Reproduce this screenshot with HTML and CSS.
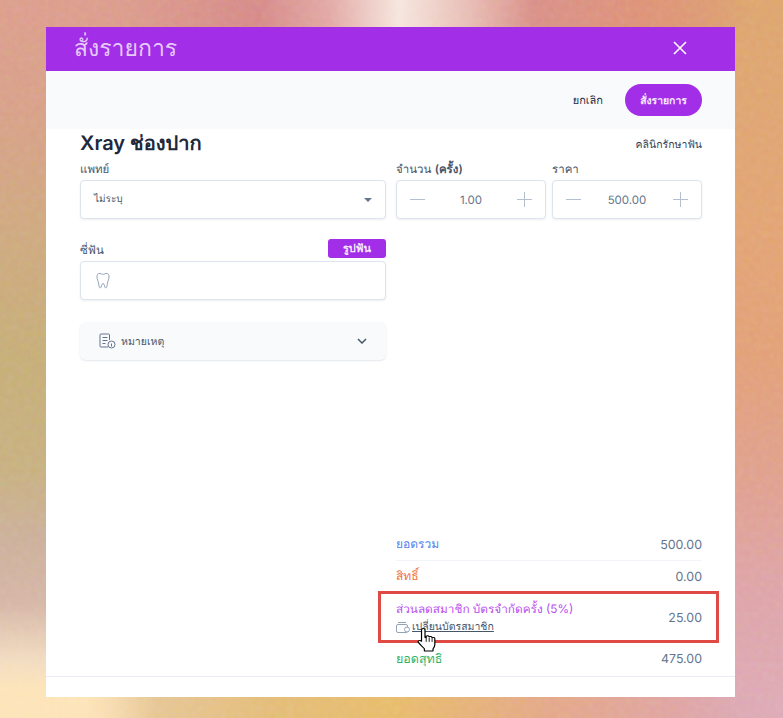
FILE: index.html
```html
<!DOCTYPE html>
<html lang="th">
<head>
    <meta charset="UTF-8">
    <meta name="viewport" content="width=device-width, initial-scale=1.0">
    <title>สั่งรายการ</title>
    <link rel="stylesheet" href="styles.css">
</head>
<body>
    <svg class="grain" width="783" height="718">
        <filter id="grain-filter">
            <feTurbulence type="fractalNoise" baseFrequency="0.16" numOctaves="2" seed="4"/>
            <feColorMatrix type="saturate" values="1.6"/>
        </filter>
        <rect width="783" height="718" filter="url(#grain-filter)"/>
    </svg>
    <div class="modal">
        <header class="modal-head">
            <h1>สั่งรายการ</h1>
            <svg class="close-icon" width="16" height="16" viewBox="0 0 16 16"><path d="M2 2l12 12M14 2L2 14" stroke="#fff" stroke-width="1.6" fill="none"/></svg>
        </header>
        <div class="toolbar">
            <span class="cancel">ยกเลิก</span>
            <button class="submit">สั่งรายการ</button>
        </div>
        <div class="content">
            <div class="title-row">
                <h2>Xray ช่องปาก</h2>
                <span class="clinic">คลินิกรักษาฟัน</span>
            </div>
            <div class="form-grid">
                <div class="col-left">
                    <label class="field-label">แพทย์</label>
                    <div class="input-box select-box">
                        <span>ไม่ระบุ</span>
                        <span class="caret"></span>
                    </div>
                    <div class="tooth-label">
                        <label class="field-label">ซี่ฟัน</label>
                        <span class="tooth-btn">รูปฟัน</span>
                    </div>
                    <div class="input-box tooth-box">
                        <svg width="14" height="18" viewBox="0 0 14 18" fill="none" stroke="#94a3b8" stroke-width="1"><path d="M4 1.500C2 1 1 2.600 1 5c0 2.500 1.200 3.500 1.500 6 .2 2 .7 5 1.800 5 1.200 0 1-4.500 2.700-4.500S8.500 16 9.700 16c1.100 0 1.600-3 1.800-5 .3-2.500 1.500-3.500 1.500-6 0-2.400-1-4-3-3.500C8.500 1.900 8 2.300 7 2.300S5.500 1.900 4 1.500z"/></svg>
                    </div>
                    <div class="note-bar">
                        <svg width="17" height="16" viewBox="0 0 17 16" fill="none" stroke="#64748b" stroke-width="1"><path d="M10.500 7V2a1 1 0 0 0-1-1H2a1 1 0 0 0-1 1v11a1 1 0 0 0 1 1h7M3.500 4.500h5M3.500 7.500h5M3.500 10.500h3"/><circle cx="12.500" cy="11.500" r="3.500"/><path d="M12.500 10.500v3"/></svg>
                        <span class="note-text">หมายเหตุ</span>
                        <svg class="chevron" width="10" height="6" viewBox="0 0 10 6" fill="none" stroke="#475569" stroke-width="1.500"><path d="M1 1l4 4 4-4"/></svg>
                    </div>
                </div>
                <div>
                    <label class="field-label">จำนวน <b>(ครั้ง)</b></label>
                    <div class="input-box stepper">
                        <span class="step-minus"></span>
                        <span class="step-value">1.00</span>
                        <span class="step-plus"></span>
                    </div>
                </div>
                <div>
                    <label class="field-label">ราคา</label>
                    <div class="input-box stepper">
                        <span class="step-minus"></span>
                        <span class="step-value">500.00</span>
                        <span class="step-plus"></span>
                    </div>
                </div>
            </div>
            <div class="summary">
                <div class="sum-row sum-total">
                    <span class="blue">ยอดรวม</span>
                    <span class="sum-num">500.00</span>
                </div>
                <div class="sum-row sum-right">
                    <span class="orange">สิทธิ์</span>
                    <span class="sum-num">0.00</span>
                </div>
                <div class="sum-row sum-member">
                    <div class="member-text">
                        <div class="purple">ส่วนลดสมาชิก บัตรจำกัดครั้ง (5%)</div>
                        <div class="swap">
                            <svg width="14" height="11" viewBox="0 0 14 11" fill="none" stroke="#94a3b8" stroke-width="1"><rect x="0.500" y="2.500" width="11" height="8" rx="1.500"/><path d="M2 .5h8"/><circle cx="11" cy="7.500" r="2.500" fill="#fff"/></svg>
                            <a href="#">เปลี่ยนบัตรสมาชิก</a>
                        </div>
                    </div>
                    <span class="sum-num">25.00</span>
                    <svg class="cursor" width="24" height="25" viewBox="0 0 20 26" preserveAspectRatio="none"><path d="M6 1.500c1 0 1.500.7 1.500 1.500v8l1 .2V9.500c1-.8 2.200-.4 2.500.7.900-.7 2.100-.3 2.400.8 1-.5 2.300 0 2.300 1.300v6c0 2-.7 3.200-1.500 4.400v2.300H7v-2.300c-1.500-2-3.500-4.500-5-6.700-.8-1.300.7-2.700 2-1.700l.6.600V3c0-.8.500-1.500 1.400-1.500z" fill="#fff" stroke="#000" stroke-width="1" stroke-linejoin="round"/><path d="M8.500 11.500v4M11 11v4.500M13.400 11.500v4" stroke="#000" stroke-width=".8"/></svg>
                </div>
                <div class="sum-row sum-net">
                    <span class="green">ยอดสุทธิ</span>
                    <span class="sum-num">475.00</span>
                </div>
            </div>
        </div>
        <div class="modal-foot"></div>
    </div>
</body>
</html>
```

FILE: styles.css
```css
html, body {
    height: 100%;
}
body {
    margin: 0;
    overflow: hidden;
    position: relative;
    font-family: Inter, "Noto Sans", "Liberation Sans", sans-serif;
    text-rendering: geometricPrecision;
    color: #334155;
    background-color: #e0a878;
    background-repeat: no-repeat;
    background-image:
        linear-gradient(90deg, #dc9e8c, #dc9c8c 15%, #d68a88 33%, #e2a8a4 42%, #f6e6de 51%, #e8bcb4 60%, #d99088 68%, #de9278 82%, #dd9a74 90%, #dda56f 96%),
        linear-gradient(90deg, #fde4b8 11%, #f8dcb0 14%, #e6c694 20%, #e4bc78 35%, #e8bc6c 50%, #e4a888 70%, #e0a4a0 85%, #dca8b2 94%, #deaab6),
        linear-gradient(#dc9e8c, #d8a088 15%, #d0a880 30%, #c6ae78 50%, #c8b080 65%, #ccb09a 75%, #d6b6a6 84%, #f2dcc0 92%, #fde4b8 96%),
        linear-gradient(#dda56f, #e2a474 30%, #e2a078 50%, #e0a090 68%, #dea4a8 82%, #deaab6);
    background-size: 100% 27px, 100% 21px, 46px 100%, 48px 100%;
    background-position: top, bottom, left, right;
}
.grain {
    position: absolute;
    left: 0;
    top: 0;
    opacity: 0.14;
    mix-blend-mode: overlay;
}
.modal {
    width: 689px;
    height: 670px;
    margin-left: 46px;
    background: #fff;
    display: flex;
    flex-direction: column;
    position: relative;
    top: 27px;
}
.modal-head {
    height: 44px;
    background: #a22ee8;
    display: flex;
    justify-content: space-between;
    align-items: center;
    padding: 0 47px 0 28px;
    flex-shrink: 0;
}
.modal-head h1 {
    margin: 0;
    font-size: 23px;
    font-weight: 500;
    color: #e6caf8;
}
.close-icon {
    margin-top: -3px;
}
.toolbar {
    height: 58px;
    background: #f8fafc;
    display: flex;
    justify-content: flex-end;
    align-items: center;
    gap: 22px;
    padding: 0 33px;
    flex-shrink: 0;
}
.cancel {
    font-size: 11px;
    font-weight: 500;
    color: #1e293b;
}
.submit {
    width: 77px;
    height: 32px;
    border: none;
    border-radius: 16px;
    background: #a22ee8;
    color: #f5e9fd;
    font-family: inherit;
    text-rendering: inherit;
    font-size: 10.400px;
    font-weight: 600;
}
.content {
    flex: 1;
    padding: 0 33px 0 34px;
    display: flex;
    flex-direction: column;
}
.title-row {
    display: flex;
    justify-content: space-between;
    align-items: center;
    height: 28px;
}
.title-row h2 {
    margin: 0;
    font-size: 20px;
    font-weight: 600;
    color: #1e293b;
}
.clinic {
    font-size: 10.500px;
    color: #334155;
    margin-top: 3px;
}
.form-grid {
    display: grid;
    grid-template-columns: 310px 150px 150px;
    column-gap: 6px;
    margin-top: 1px;
}
.col-left {
    margin-right: 4px;
}
.field-label {
    display: block;
    font-size: 11.500px;
    line-height: 22px;
    color: #475569;
}
.field-label b {
    font-weight: 600;
}
.input-box {
    height: 39px;
    box-sizing: border-box;
    border: 1px solid #dde4ee;
    border-radius: 4px;
    box-shadow: 0 1px 2px rgba(100, 116, 139, 0.12);
    background: #fff;
    display: flex;
    align-items: center;
    font-size: 11.500px;
}
.select-box {
    justify-content: space-between;
    padding: 0 13px;
    font-size: 10px;
    color: #475569;
}
.caret {
    width: 0;
    height: 0;
    border-left: 4px solid transparent;
    border-right: 4px solid transparent;
    border-top: 4px solid #64748b;
}
.stepper {
    justify-content: space-between;
    padding: 0 13px;
    color: #64748b;
}
.step-minus, .step-plus {
    width: 15px;
    height: 15px;
    background: linear-gradient(#b4c0d0, #b4c0d0) center / 15px 1px no-repeat;
}
.step-plus {
    background:
        linear-gradient(#b4c0d0, #b4c0d0) center / 15px 1px no-repeat,
        linear-gradient(#b4c0d0, #b4c0d0) center / 1px 15px no-repeat;
}
.tooth-label {
    display: flex;
    justify-content: space-between;
    align-items: flex-end;
    margin-top: 19px;
    height: 23px;
}
.tooth-btn {
    width: 58px;
    height: 19px;
    margin-bottom: 3px;
    border-radius: 3px;
    background: #a22ee8;
    color: #f5e9fd;
    font-size: 11px;
    font-weight: 600;
    text-align: center;
    line-height: 19px;
}
.tooth-box {
    padding-left: 15px;
}
.note-bar {
    height: 38px;
    margin-top: 22px;
    display: flex;
    align-items: center;
    gap: 5px;
    padding: 0 19px;
    background: #f8fafc;
    border-radius: 6px;
    box-shadow: 0 1px 2px rgba(100, 116, 139, 0.18);
}
.note-text {
    font-size: 10.500px;
    font-weight: 500;
    color: #475569;
}
.chevron {
    margin-left: auto;
}
.summary {
    margin: auto 0 0 316px;
}
.sum-row {
    display: flex;
    justify-content: space-between;
    align-items: center;
    font-size: 12px;
}
.sum-num {
    font-size: 12.400px;
    color: #64748b;
}
.sum-total {
    height: 33px;
    box-sizing: border-box;
    border-bottom: 1px solid #f1f5f9;
}
.sum-right {
    height: 30px;
    padding-top: 1px;
    box-sizing: border-box;
}
.sum-member {
    height: 52px;
    position: relative;
    box-sizing: border-box;
    margin: 0 -17px 0 -18px;
    padding: 0 14px 0 15px;
    border: 3px solid #e04a44;
}
.member-text {
    margin-top: 2px;
}
.sum-net {
    height: 33px;
    padding-bottom: 2px;
    box-sizing: border-box;
}
.blue { color: #4f7ff0; font-weight: 500; }
.orange { color: #f0703a; font-weight: 500; }
.purple { color: #b94cf0; font-size: 11.800px; line-height: 16px; }
.green { color: #2fb368; font-weight: 500; font-size: 12.500px; }
.swap {
    display: flex;
    align-items: center;
    gap: 2px;
    margin-top: 2px;
    font-size: 10.500px;
    line-height: 16px;
}
.swap a {
    color: #475569;
}
.cursor {
    position: absolute;
    left: 35px;
    top: 33px;
}
.modal-foot {
    height: 20px;
    border-top: 1px solid #e9edf3;
    flex-shrink: 0;
}
```
